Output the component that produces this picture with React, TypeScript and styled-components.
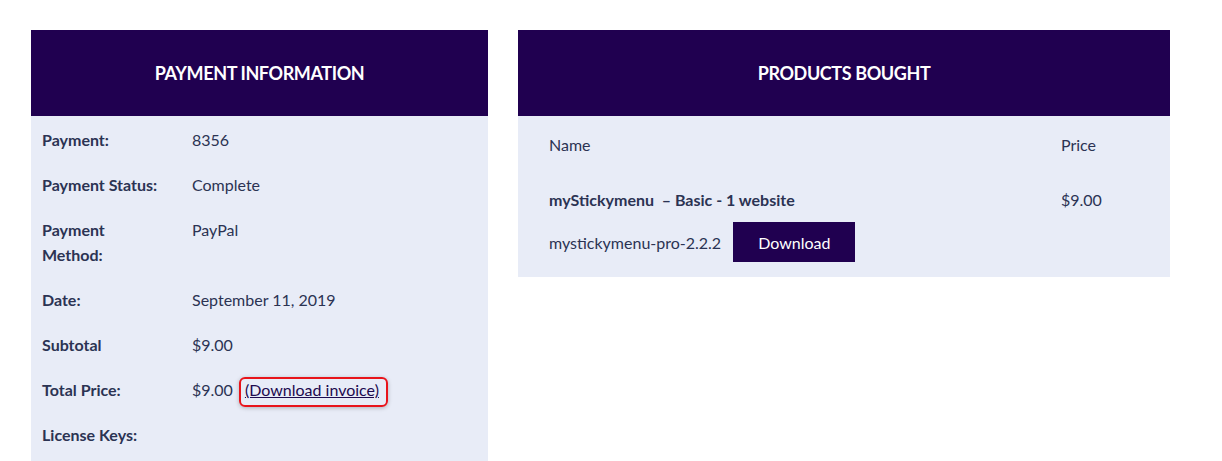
import React from "react";
import styled, { createGlobalStyle } from "styled-components";

const GlobalStyle = createGlobalStyle`
  body {
    margin: 0;
    background: #fff;
    font-family: Lato, "Liberation Sans", sans-serif;
    color: #2b3353;
  }
`;

const Page = styled.div`
  display: flex;
  align-items: flex-start;
  gap: 30px;
  padding: 30px 0 0 31px;
`;

const Panel = styled.section<{ $width: number }>`
  width: ${(p) => p.$width}px;
  background: #e8ecf7;
`;

const PanelHeader = styled.h2`
  margin: 0;
  height: 86px;
  display: flex;
  align-items: center;
  justify-content: center;
  background: #200050;
  color: #fff;
  font-size: 18px;
  font-weight: 700;
  letter-spacing: -0.4px;
  text-transform: uppercase;
`;

const InfoList = styled.dl`
  margin: 0;
  padding: 0 11px 20px;
`;

const InfoRow = styled.div`
  display: grid;
  grid-template-columns: 150px 1fr;
  padding: 11px 0 9px;
  font-size: 16px;
  line-height: 25px;
`;

const Label = styled.dt`
  font-weight: 700;
  max-width: 122px;
`;

const Value = styled.dd`
  margin: 0;
`;

const Highlight = styled.span`
  margin-left: 6px;
  padding: 1px 7px 6px 4px;
  border: 2px solid #e8141b;
  border-radius: 6px;
  box-shadow: 0 1px 4px rgba(0, 0, 0, 0.25);
`;

const InvoiceLink = styled.a`
  color: #1d0a4f;
  text-decoration: underline;
`;

const ProductTable = styled.div`
  padding: 0 31px 15px;
  font-size: 16px;
  line-height: 25px;
`;

const TableRow = styled.div<{ $head?: boolean }>`
  display: grid;
  grid-template-columns: 1fr 78px;
  padding: ${(p) => (p.$head ? "16px 0 17px" : "13px 0 0")};
`;

const ProductName = styled.div`
  font-weight: 700;
`;

const FileLine = styled.div`
  display: flex;
  align-items: center;
  gap: 12px;
  margin-top: 10px;
`;

const DownloadButton = styled.button`
  height: 40px;
  padding: 0 25px;
  border: none;
  background: #200050;
  color: #fff;
  font-family: inherit;
  font-size: 16px;
  cursor: pointer;
`;

const payment = [
  { label: "Payment:", value: "8356" },
  { label: "Payment Status:", value: "Complete" },
  { label: "Payment Method:", value: "PayPal" },
  { label: "Date:", value: "September 11, 2019" },
  { label: "Subtotal", value: "$9.00" },
];

const App: React.FC = () => {
  return (
    <>
      <GlobalStyle />
      <Page>
        <Panel $width={457}>
          <PanelHeader>Payment Information</PanelHeader>
          <InfoList>
            {payment.map((row, i) => (
              <InfoRow key={i}>
                <Label>{row.label}</Label>
                <Value>{row.value}</Value>
              </InfoRow>
            ))}
            <InfoRow>
              <Label>Total Price:</Label>
              <Value>
                $9.00
                <Highlight>
                  <InvoiceLink href="#">(Download invoice)</InvoiceLink>
                </Highlight>
              </Value>
            </InfoRow>
            <InfoRow>
              <Label>License Keys:</Label>
              <Value />
            </InfoRow>
          </InfoList>
        </Panel>
        <Panel $width={652}>
          <PanelHeader>Products Bought</PanelHeader>
          <ProductTable>
            <TableRow $head>
              <div>Name</div>
              <div>Price</div>
            </TableRow>
            <TableRow>
              <div>
                <ProductName>myStickymenu&nbsp; – Basic - 1 website</ProductName>
                <FileLine>
                  <span>mystickymenu-pro-2.2.2</span>
                  <DownloadButton>Download</DownloadButton>
                </FileLine>
              </div>
              <div>$9.00</div>
            </TableRow>
          </ProductTable>
        </Panel>
      </Page>
    </>
  );
};

export default App;
